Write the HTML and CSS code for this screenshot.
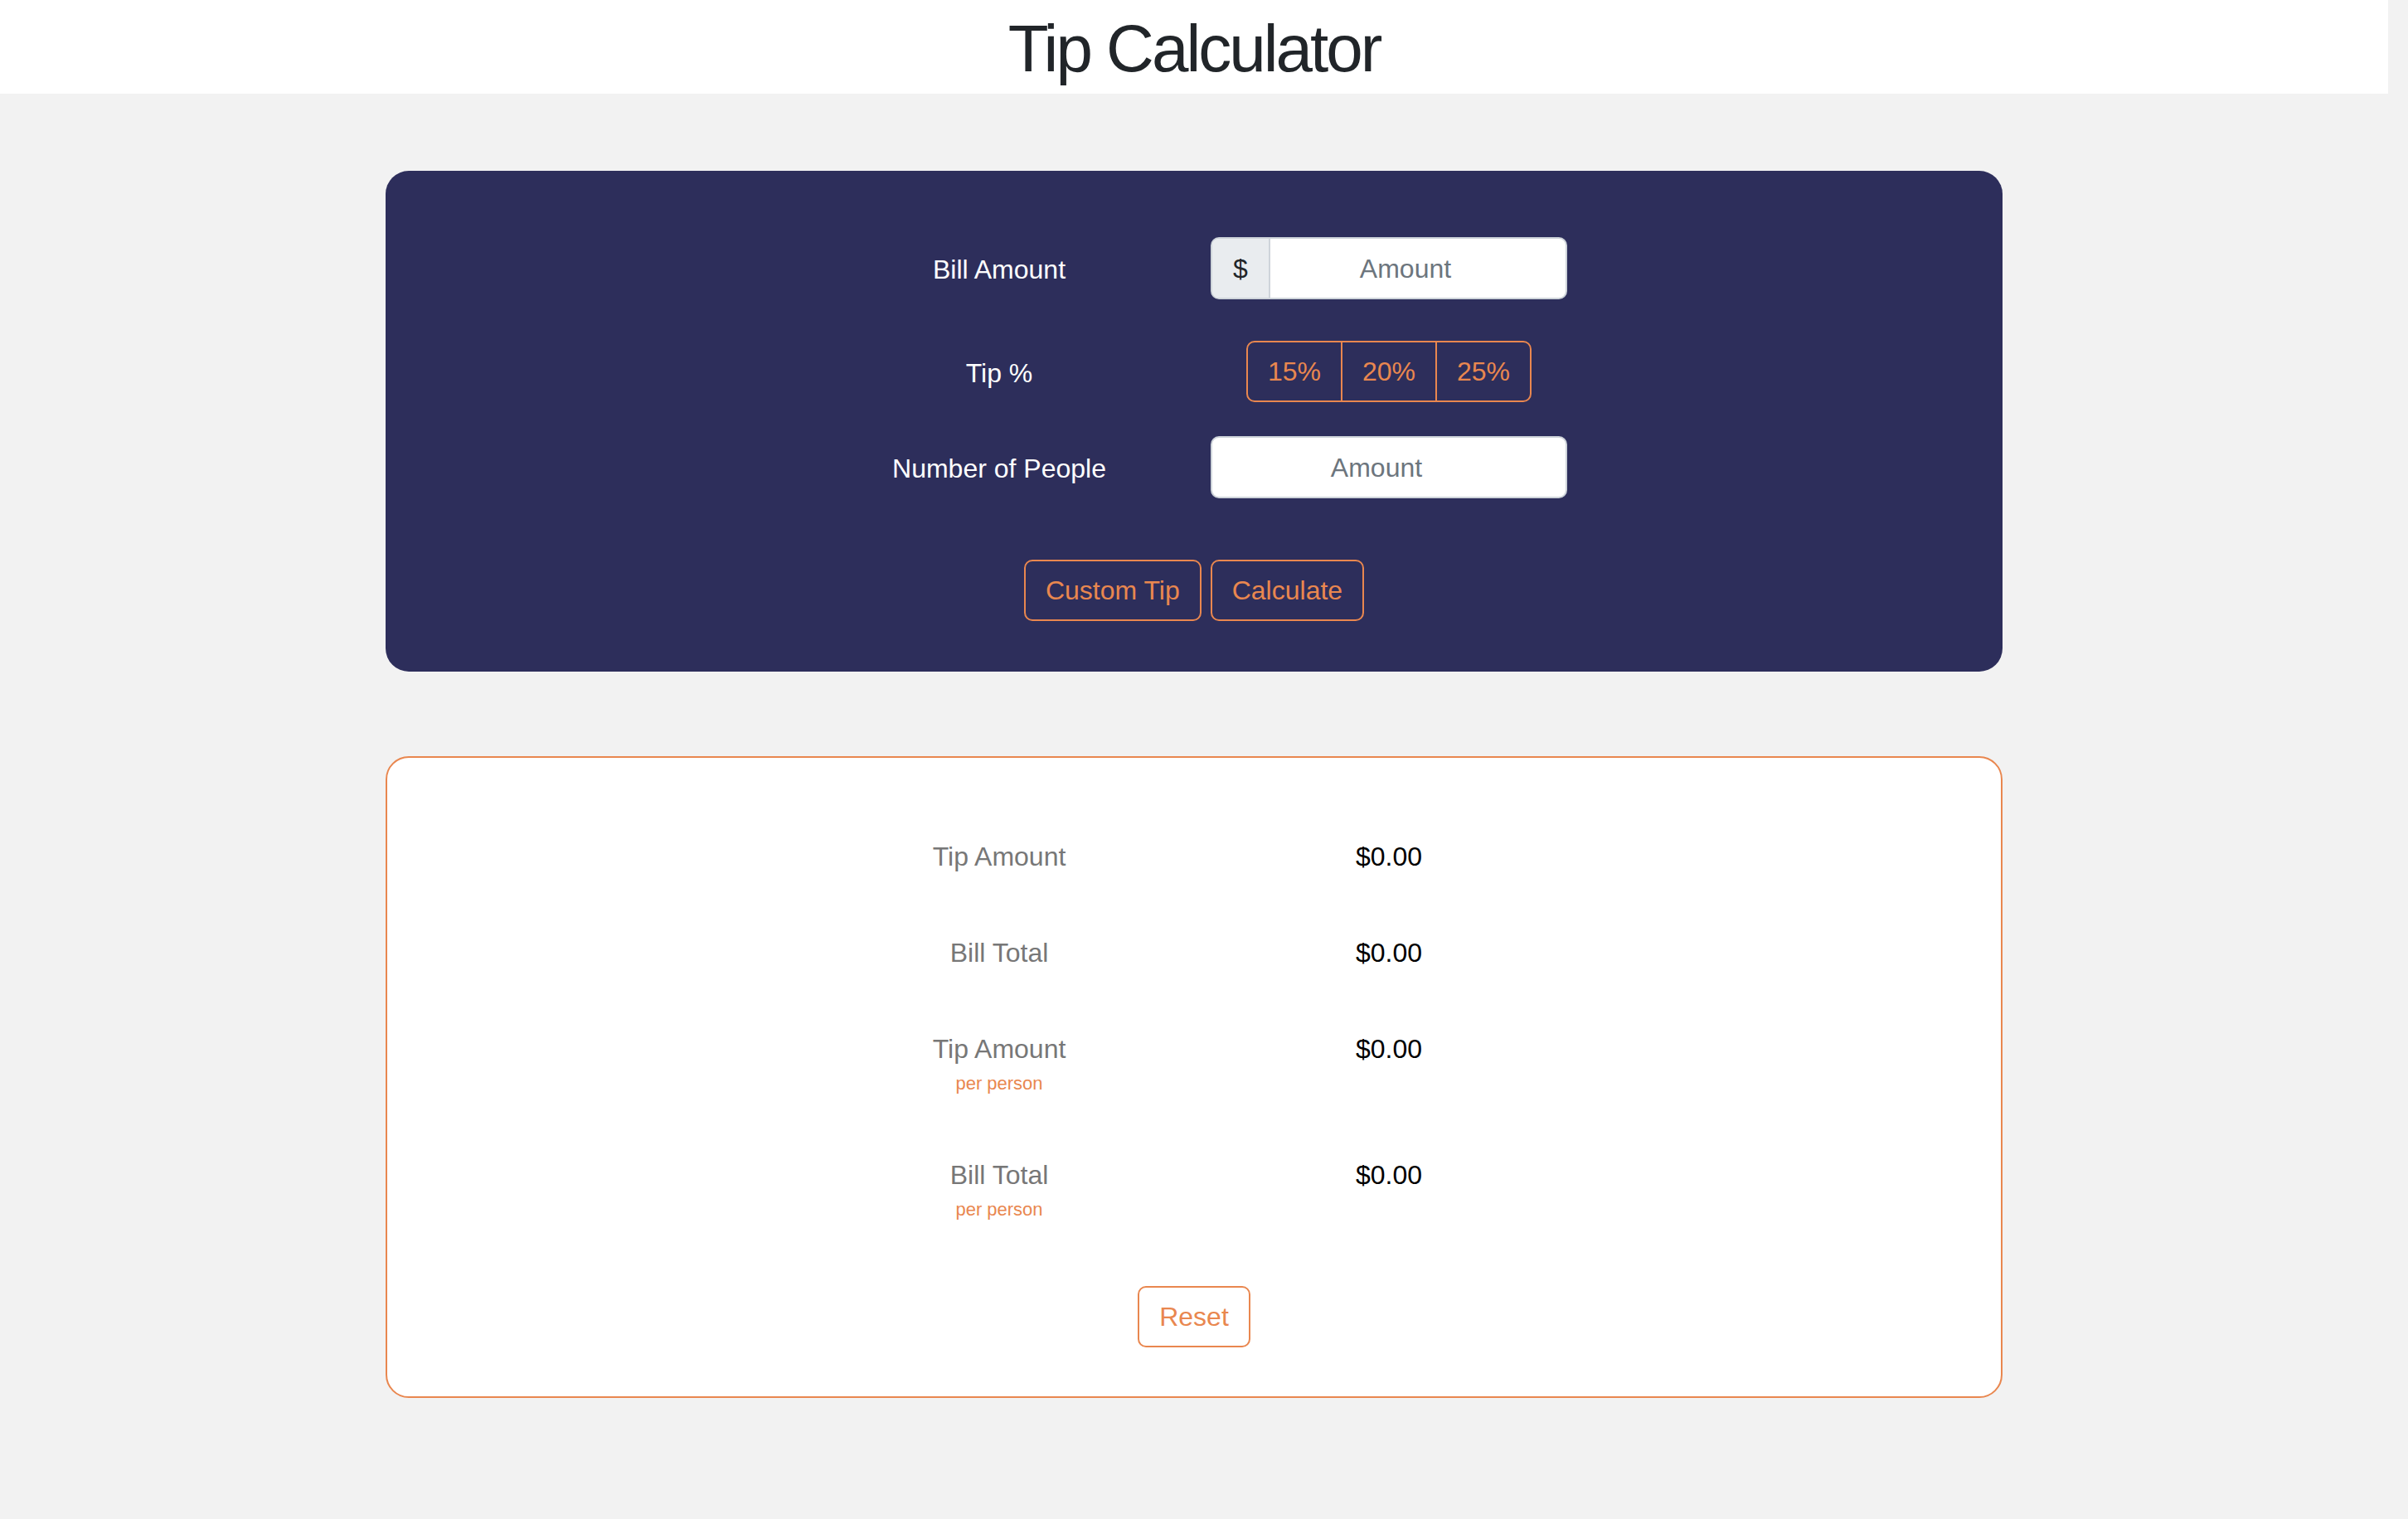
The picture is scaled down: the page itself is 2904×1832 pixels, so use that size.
FILE: index.html
```html
<!DOCTYPE html>
<html lang="en">
<head>
<meta charset="utf-8">
<title>Tip Calculator</title>
<link rel="stylesheet" href="styles.css">
</head>
<body>
<div class="page">
  <header class="header">
    <h1 class="title">Tip Calculator</h1>
  </header>
  <main class="container">
    <section class="card card-input">
      <div class="grid row-bill">
        <div class="label">Bill Amount</div>
        <div class="control">
          <div class="input-group">
            <span class="addon">$</span>
            <span class="field field-bill">Amount</span>
          </div>
        </div>
      </div>
      <div class="grid row-tip">
        <div class="label">Tip %</div>
        <div class="control">
          <div class="btn-group">
            <button class="btn btn-seg first">15%</button>
            <button class="btn btn-seg">20%</button>
            <button class="btn btn-seg last">25%</button>
          </div>
        </div>
      </div>
      <div class="grid row-people">
        <div class="label">Number of People</div>
        <div class="control">
          <div class="input-group">
            <span class="field">Amount</span>
          </div>
        </div>
      </div>
      <div class="actions">
        <button class="btn btn-outline">Custom Tip</button>
        <button class="btn btn-outline">Calculate</button>
      </div>
    </section>

    <section class="card card-result">
      <div class="grid result-row">
        <div class="r-label">Tip Amount</div>
        <div class="r-value">$0.00</div>
      </div>
      <div class="grid result-row">
        <div class="r-label">Bill Total</div>
        <div class="r-value">$0.00</div>
      </div>
      <div class="grid result-row">
        <div class="r-label">Tip Amount<span class="sub">per person</span></div>
        <div class="r-value">$0.00</div>
      </div>
      <div class="grid result-row last-row">
        <div class="r-label">Bill Total<span class="sub">per person</span></div>
        <div class="r-value">$0.00</div>
      </div>
      <div class="actions reset-wrap">
        <button class="btn btn-reset">Reset</button>
      </div>
    </section>
  </main>
</div>
</body>
</html>
```
FILE: styles.css
```css
* { box-sizing: border-box; }

html, body {
  margin: 0;
  padding: 0;
  background: #f2f2f2;
  font-family: "Liberation Sans", Arial, sans-serif;
  font-size: 32px;
  line-height: 1.5;
  color: #212529;
}

.page {
  width: 2880px;
  min-height: 1832px;
}

.header {
  background: #ffffff;
  height: 113px;
  padding-top: 11px;
  text-align: center;
}

.title {
  margin: 0;
  font-size: 80px;
  font-weight: 400;
  line-height: 1.2;
  letter-spacing: -3px;
  color: #212529;
}

.container {
  width: 1950px;
  margin: 93px auto 0;
}

.card {
  border-radius: 28px;
}

.card-input {
  background: #2d2e5b;
  padding: 80px 0 61px;
}

.card-result {
  margin-top: 102px;
  background: #ffffff;
  border: 2px solid #e9874f;
  padding: 95px 0 59px;
}

.grid {
  width: 940px;
  margin: 0 auto;
  display: grid;
  grid-template-columns: 470px 470px;
  align-items: center;
}

.row-bill { margin-bottom: 50px; }
.row-tip { margin-bottom: 41px; }
.row-people { margin-bottom: 74px; }

.label {
  color: #ffffff;
  text-align: center;
  padding-top: 3px;
}

.control {
  display: flex;
  justify-content: center;
}

.input-group {
  width: 430px;
  height: 75px;
  display: flex;
  background: #ffffff;
  border: 2px solid #ced4da;
  border-radius: 10px;
  overflow: hidden;
}

.addon {
  width: 70px;
  flex: none;
  display: flex;
  align-items: center;
  justify-content: center;
  background: #e9ecef;
  border-right: 2px solid #ced4da;
  color: #212529;
}

.field {
  flex: 1;
  display: flex;
  align-items: center;
  justify-content: center;
  padding-right: 30px;
  color: #6c757d;
}

.btn {
  font-family: inherit;
  font-size: 32px;
  line-height: 1.5;
  background: transparent;
  color: #e9874f;
  border: 2px solid #e9874f;
  border-radius: 10px;
  height: 74px;
  padding: 0 24px;
  cursor: pointer;
}

.btn-group {
  display: flex;
}

.btn-seg {
  border-radius: 0;
  padding: 0 24px;
}

.btn-seg + .btn-seg { margin-left: -2px; }

.btn-seg.first { border-radius: 10px 0 0 10px; }
.btn-seg.last { border-radius: 0 10px 10px 0; }

.actions {
  display: flex;
  justify-content: center;
  gap: 11px;
}

.result-row {
  align-items: start;
  margin-bottom: 68px;
}

.result-row.last-row { margin-bottom: 0; }

.r-label {
  text-align: center;
  color: #777777;
  line-height: 48px;
}

.sub {
  display: block;
  font-size: 22px;
  line-height: 36px;
  color: #e9874f;
}

.r-value {
  text-align: center;
  color: #000000;
  line-height: 48px;
}

.reset-wrap {
  margin-top: 74px;
}

.btn-reset {
  background: #ffffff;
}
```
